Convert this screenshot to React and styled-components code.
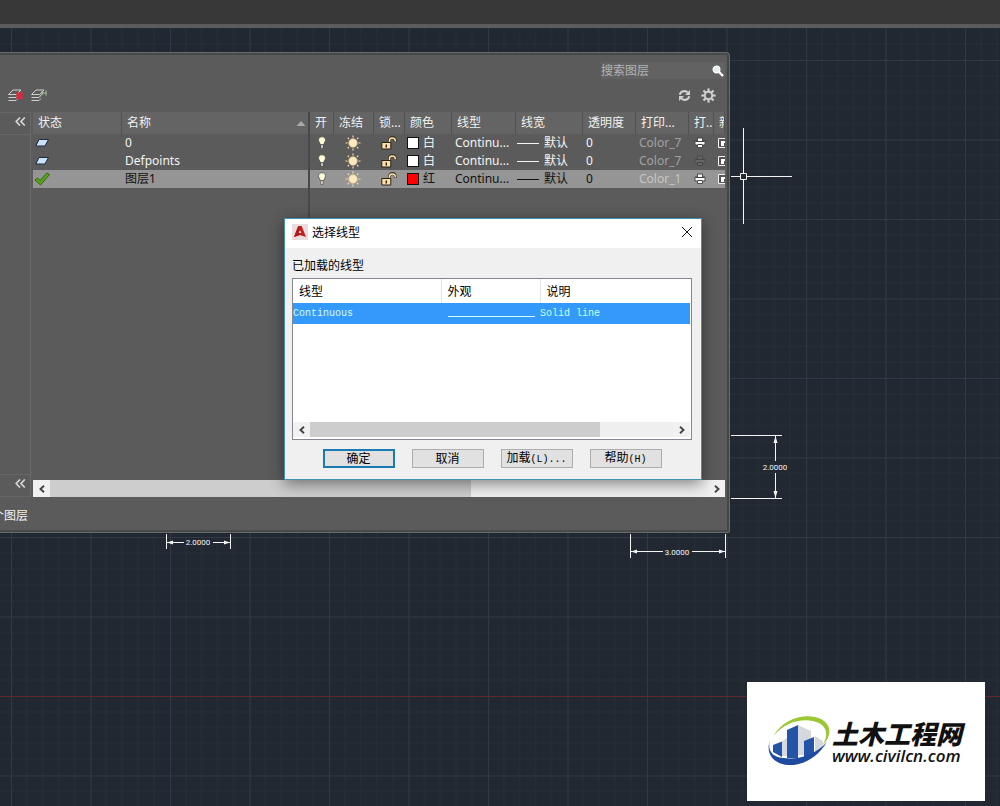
import React from "react";
import styled, { createGlobalStyle } from "styled-components";

const uiFont = `"Noto Sans", "Noto Sans CJK SC", sans-serif`;
const monoFont = `"Liberation Mono", "Noto Sans CJK SC", monospace`;

const GlobalStyle = createGlobalStyle`
    * { box-sizing: border-box; }
    body {
        margin: 0;
        background: #222832;
        font-family: ${uiFont};
        font-size: 12px;
    }
    button, input { font-family: inherit; font-size: inherit; }
`;

const Page = styled.div`
    display: flex;
    flex-direction: column;
    min-height: 100vh;
    overflow: hidden;
`;

const TopBar = styled.header`
    height: 28px;
    background: #383838;
    border-bottom: 4px solid #5c5c5c;
`;

const Canvas = styled.main`
    position: relative;
    flex: 1;
    min-height: 560px;
    background: #222831;
    overflow: hidden;
`;

const Drawing = styled.svg`
    position: absolute;
    inset: 0;
    width: 100%;
    height: 100%;
    font-family: Roboto, sans-serif;
    font-size: 8px;
`;

const Palette = styled.section`
    position: absolute;
    top: 24px;
    left: 0;
    width: 73%;
    min-width: 640px;
    display: flex;
    flex-direction: column;
    padding: 9px 4px 0 0;
    color: #f2f2f2;
    background: #5b5b5b;
    border: solid #676a68;
    border-width: 1px 1px 1px 0;
    border-radius: 0 4px 2px 0;
    box-shadow: inset -2px 0 #454745, inset 0 2px #464a4a, inset 0 -2px #4a4a4a;
`;

const SearchBox = styled.label`
    display: flex;
    align-items: center;
    align-self: flex-end;
    width: 124px;
    height: 17px;
    background: #626262;

    input {
        flex: 1;
        min-width: 0;
        padding: 0;
        border: 0;
        background: none;
        color: #fff;
        outline: none;
    }
    input::placeholder { color: #b4b4b4; opacity: 1; }
`;

const Tools = styled.div`
    display: flex;
    align-items: center;
    gap: 6px;
    height: 33px;
    padding: 0 9px 0 7px;
`;

const IconButton = styled.button`
    display: flex;
    padding: 0;
    border: 0;
    background: none;
    color: ${props => props.$color || "#d0d0d0"};
    margin-left: ${props => props.$push ? "auto" : "0"};
`;

const PaletteBody = styled.div`
    display: flex;
    align-items: stretch;
`;

const TreeStrip = styled.div`
    display: flex;
    flex-direction: column;
    justify-content: space-between;
    width: 31px;
    margin-right: 2px;
    border-right: 1px solid #6a6a6a;
`;

const Fold = styled.button`
    height: 23px;
    padding: 0 4px 4px 0;
    border: solid #666;
    border-width: 1px 0;
    background: none;
    color: #d4d4d4;
    display: flex;
    align-items: center;
    justify-content: flex-end;
`;

const Layers = styled.div`
    flex: 1;
    min-width: 0;
`;

const LayerTable = styled.table`
    width: 100%;
    height: 368px;
    table-layout: fixed;
    border-collapse: separate;
    border-spacing: 0;
    white-space: nowrap;
`;

const Th = styled.th`
    height: 22px;
    padding: 0 0 0 5px;
    overflow: hidden;
    text-align: left;
    font-weight: 400;
    line-height: 16px;
    background: #646464;
    border-right: ${props => props.$split ? "2px solid #484848" : "1px solid #515151"};
`;

const HeadLabel = styled.span`
    display: flex;
    align-items: center;
    justify-content: space-between;
`;

const Td = styled.td`
    height: 18px;
    padding: 0 0 0 ${props => props.$tight ? 1 : 3}px;
    overflow: hidden;
    line-height: 16px;
    color: ${props => props.$dim ? "#a2a2a2" : "inherit"};
    border-right: ${props => props.$split ? "2px solid #484848" : "0"};

    svg { display: block; }
`;

const Tr = styled.tr`
    height: 18px;
    color: ${props => props.$on ? "#111" : "#f4f4f4"};
    background: ${props => props.$on ? "#959595" : "none"};
`;

const FillRow = styled.tr`
    height: 100%;
`;

const Cell = styled.span`
    display: flex;
    align-items: center;
    gap: ${props => props.$gap || 0}px;
    padding-left: ${props => props.$indent || 0}px;
`;

const Swatch = styled.i`
    width: 12px;
    height: 12px;
    border: 1px solid #111;
    background: ${props => props.$color};
`;

const Weight = styled.i`
    width: 22px;
    height: 1px;
    background: currentColor;
`;

const PlotStyle = styled.span`
    color: ${props => props.$on ? "#c6c6c6" : "inherit"};
`;

const ScrollBar = styled.div`
    display: flex;
    height: ${props => props.$size}px;
    background: #efefef;
`;

const ScrollTrack = styled.div`
    flex: 1;
`;

const ScrollThumb = styled.div`
    height: 100%;
    background: #cdcdcd;
`;

const ScrollArrow = styled.button`
    display: flex;
    align-items: center;
    justify-content: center;
    width: 17px;
    padding: 0;
    border: 0;
    background: #f1f1f1;
    color: #444;
`;

const StatusLine = styled.footer`
    display: flex;
    justify-content: flex-end;
    align-items: center;
    width: 28px;
    height: 35px;
    overflow: hidden;
    white-space: nowrap;
`;

const Dialog = styled.div`
    position: absolute;
    top: 190px;
    left: 284px;
    width: 418px;
    color: #000;
    background: #f0f0f0;
    border: 1px solid #3f93b0;
    box-shadow: 0 4px 14px rgba(0, 0, 0, 0.45);
`;

const TitleBar = styled.div`
    display: flex;
    align-items: center;
    gap: 4px;
    height: 29px;
    padding: 0 8px 3px 7px;
    background: #fff;

    h1 {
        flex: 1;
        margin: 0;
        font-size: 12px;
        font-weight: 400;
    }
`;

const DialogBody = styled.div`
    padding: 10px 9px 11px 7px;
`;

const ListLabel = styled.div`
    line-height: 16px;
    margin-bottom: 4px;
`;

const ListBox = styled.div`
    display: flex;
    flex-direction: column;
    height: 162px;
    padding: 0 1px 2px 0;
    background: #fff;
    border: 1px solid #828790;
`;

const ListArea = styled.div`
    flex: 1;
`;

const TypeTable = styled.table`
    width: 100%;
    table-layout: fixed;
    border-collapse: collapse;
    text-align: left;

    th {
        height: 24px;
        padding: 0 0 0 6px;
        font-weight: 400;
        border-right: 1px solid #e3e3e3;
    }
    th:last-child { border: 0; }
    td {
        height: 21px;
        padding: 0;
        color: #d4ffff;
        background: #3399fa;
        font-family: ${monoFont};
        font-size: 10px;
    }
`;

const Sample = styled.div`
    height: 1px;
    margin: 6px 5px 0 7px;
    background: #d4ffff;
`;

const Actions = styled.div`
    display: flex;
    justify-content: center;
    gap: 17px;
    margin-top: 9px;
`;

const PushButton = styled.button`
    width: 72px;
    height: 19px;
    padding: 0;
    line-height: 14px;
    color: #000;
    background: #e1e1e1;
    border: ${props => props.$default ? "2px solid #1a7bb3" : "1px solid #adadad"};
    white-space: nowrap;

    span {
        font-family: ${monoFont};
        font-size: 10px;
    }
`;

const Brand = styled.a`
    position: absolute;
    right: 15px;
    bottom: 5px;
    display: flex;
    align-items: center;
    width: 238px;
    height: 119px;
    padding-left: 20px;
    color: #111;
    background: #fff;
    text-decoration: none;
`;

const BrandText = styled.span`
    display: flex;
    flex-direction: column;
    white-space: nowrap;

    b {
        font-family: "Noto Sans CJK SC", sans-serif;
        font-size: 26px;
        font-weight: 900;
        font-style: italic;
        line-height: 28px;
    }
    em {
        font-family: "Open Sans", sans-serif;
        font-size: 17px;
        font-weight: 600;
        line-height: 17px;
    }
`;

const SheetIcon = () => (
    <svg width="15" height="10" viewBox="0 0 15 10">
        <path d="M4 1.500h9.500L10 8H.8z" fill="#c9e2fb" stroke="#1d2c40" />
    </svg>
);

const CheckIcon = () => (
    <svg width="17" height="14" viewBox="0 0 17 14">
        <path d="M1 8l2.500-2L6 8.500 13 1l2.500 1.500L6.500 13z" fill="#58a51c" stroke="#2d6a0c" />
    </svg>
);

const BulbIcon = () => (
    <svg width="10" height="14" viewBox="0 0 10 14">
        <path d="M5 .8c2.200 0 3.500 1.500 3.500 3.300C8.500 5.700 7 6.500 6.800 8.500H3.200C3 6.500 1.500 5.700 1.500 4.100 1.500 2.300 2.800.8 5 .8z" fill="#fdfbd8" stroke="#4c4c3c" strokeWidth=".7" />
        <path d="M4 8.500h2v4H4z" fill="#f0f0e6" stroke="#333" strokeWidth=".5" />
    </svg>
);

const SunIcon = () => (
    <svg width="16" height="16" viewBox="0 0 16 16">
        <path d="M8 .5v2M8 13.500v2M.5 8h2M13.500 8h2M2.700 2.700l1.300 1.300M12 12l1.300 1.300M2.700 13.300 4 12M12 4l1.300-1.300" stroke="#f5dcae" strokeWidth="1.200" />
        <circle cx="8" cy="8" r="4.200" fill="#fbeac0" stroke="#ecc490" strokeWidth=".8" />
    </svg>
);

const LockIcon = () => (
    <svg width="16" height="14" viewBox="0 0 16 14">
        <path d="M8.500 7V4.500C8.500 .5 14 .5 14.300 4.500V6" fill="none" stroke="#3a3020" strokeWidth="2.800" />
        <path d="M8.500 7V4.500C8.500 1 14 1 14.300 4.500v1" fill="none" stroke="#fbdfa6" strokeWidth="1.500" />
        <path d="M.8 6.500h9V13h-9z" fill="#fbdfa6" stroke="#2a2112" />
        <path d="M5.300 8.500v3" stroke="#2a2112" strokeWidth="1.400" />
    </svg>
);

const PrinterIcon = ({ off }) => (
    <svg width="13" height="12" viewBox="0 0 13 12">
        <path d="M3.500 1h5v3H11v4H8.500v2.500h-5V8H1V4h2.500z" fill={off ? "#656565" : "#f7f7f7"} stroke={off ? "#484848" : "#333"} strokeWidth=".8" />
        <path d="M1.500 4.500h9M3.500 7.500h5" stroke={off ? "#484848" : "#444"} />
    </svg>
);

const ViewportIcon = () => (
    <svg width="12" height="12" viewBox="0 0 12 12">
        <path d="M1.500 1.500h10v9h-10z" fill="#555" stroke="#f2f2f2" />
        <path d="M4 4h7v2H7v3H4z" fill="#fff" />
    </svg>
);

const LayersIcon = ({ mark }) => (
    <svg width="17" height="15" viewBox="0 0 17 15" fill="none">
        <path d="M6 2h8L9.500 6.500h-8zM1.500 9.500H9l2-2M1.500 12.500H9l2-2" stroke="#d0d0d0" />
        {mark === "delete"
            ? <path d="M10 5h5v5.500h-5zM9.500 4l6.500 7.500M16 4l-6.500 7.500" fill="#e0273f" stroke="#e0273f" />
            : <path d="M9.500 8.500l4-4M12 3v4M16 2.500v5M12 5h4" stroke="#a9c69c" />}
    </svg>
);

const RefreshIcon = () => (
    <svg width="13" height="13" viewBox="0 0 13 13" fill="none">
        <path d="M1.800 5.800C2.500 2 7.500 1 9.800 3.600M11.200 7.200C10.500 11 5.500 12 3.200 9.400" stroke="currentColor" strokeWidth="2" />
        <path d="M12 1v5H7zM1 12V7h5z" fill="currentColor" />
    </svg>
);

const GearIcon = () => (
    <svg width="15" height="15" viewBox="0 0 15 15" fill="none" stroke="currentColor">
        <circle cx="7.500" cy="7.500" r="3.700" strokeWidth="2" />
        {[0, 45, 90, 135, 180, 225, 270, 315].map(a => (
            <path key={a} d="M7.500 .4v2.900" strokeWidth="2.200" transform={`rotate(${a} 7.500 7.500)`} />
        ))}
    </svg>
);

const FoldIcon = () => (
    <svg width="11" height="9" viewBox="0 0 11 9" fill="none" stroke="currentColor" strokeWidth="1.700">
        <path d="M5 .5 1.200 4.500 5 8.500M9.800.5 6 4.500l3.800 4" />
    </svg>
);

const Chevron = ({ right }) => (
    <svg width="6" height="8" viewBox="0 0 6 8" fill="none" stroke="currentColor" strokeWidth="1.900">
        <path d={right ? "M1 .8 4.500 4 1 7.200" : "M5 .8 1.500 4 5 7.200"} />
    </svg>
);

const SearchIcon = () => (
    <svg width="14" height="14" viewBox="0 0 14 14">
        <path d="M8 8l4 4" stroke="#fff" strokeWidth="2.400" />
        <circle cx="5.500" cy="5.500" r="3.400" fill="#e9f0f2" stroke="#fff" strokeWidth="1.200" />
    </svg>
);

const AppIcon = () => (
    <svg width="16" height="16" viewBox="0 0 16 16">
        <path d="M0 0h16v16H0z" fill="#e9dede" />
        <path d="M6.200 2h3.500L14 13l-4-1.300-2-.7-6 2z" fill="#c4201f" />
        <path d="M6.200 2 2 13l6-2 1-3z" fill="#b01b1c" />
        <path d="M8 6l1.300 3H6.700z" fill="#f0dada" />
    </svg>
);

const BrandLogo = () => (
    <svg width="65" height="56" viewBox="0 0 65 56">
        <path d="M6.500 22C16 4 40-2 54 5c11 6 11 17 1 27 6-9 6-18-3-23C40 3 19 6 6.500 22z" fill="#9bc832" />
        <path d="M31 11l13 6v24H31z" fill="#d5d9dd" />
        <path d="M48 22l8 5v6l-8 6zM15 27l5-3v18h-5z" fill="#d5d9dd" />
        <path d="M20 16l11-5v33H20z" fill="#2454a8" />
        <path d="M37 27l10-4v16l-10 5z" fill="#2454a8" />
        <path d="M6 31l9-3.500V43l-9-5z" fill="#2454a8" />
        <path d="M3 26c-3 10 2 17 13 18 16 2 32-3 44-16C51 43 36 52 21 51 7 50-2 40 3 26z" fill="#1e4ba0" />
    </svg>
);

function Background() {
    const minor = [1, 2, 3, 4].map(n => n * 15.9);
    return (
        <Drawing aria-hidden="true">
            <defs>
                <pattern id="grid" x="11" y="32" width="79.500" height="79.500" patternUnits="userSpaceOnUse">
                    {minor.map(n => (
                        <path key={n} d={`M${n} 0V79.500M0 ${n}H79.500`} stroke="#282e38" />
                    ))}
                    <path d="M.5 0V79.500M0 .5H79.500" stroke="#333944" />
                </pattern>
            </defs>
            <rect width="100%" height="100%" fill="url(#grid)" />
            <rect y="668" width="100%" height="1" fill="#5f2630" />

            <g stroke="#f4f4f4" fill="none">
                <path d="M743.500 100v45M743.500 152v44M731 148.500h9M747 148.500h45" />
                <path d="M740.500 145.500h6v6h-6z" />
                <path d="M731 407.500h51M731 470.500h51M775.500 407v26M775.500 445v25" />
                <path d="M166.500 506v15M230.500 506v15M167 514.500h17M213 514.500h17" />
                <path d="M630.500 506v24M725.500 506v24M631 523.500h32M692 523.500h33" />
            </g>
            <g fill="#f4f4f4" textAnchor="middle">
                <path d="M775.500 408l2 7h-4zM775.500 470l2-7h-4z" />
                <path d="M167 514.500l6-2v4zM230 514.500l-6-2v4z" />
                <path d="M631 523.500l6-2v4zM725 523.500l-6-2v4z" />
                <text x="775" y="442">2.0000</text>
                <text x="198" y="517">2.0000</text>
                <text x="677" y="527">3.0000</text>
            </g>
        </Drawing>
    );
}

const columns = [
    { label: "状态", width: 89 },
    { label: "名称", sorted: true },
    { label: "开", width: 24 },
    { label: "冻结", width: 40 },
    { label: "锁...", width: 31 },
    { label: "颜色", width: 47 },
    { label: "线型", width: 64 },
    { label: "线宽", width: 67 },
    { label: "透明度", width: 53 },
    { label: "打印...", width: 53 },
    { label: "打..", width: 25 },
    { label: "新", width: 11 },
];

const layers = [
    { name: "0", color: "#fff", colorName: "白", style: "Color_7" },
    { name: "Defpoints", color: "#fff", colorName: "白", style: "Color_7", noPlot: true },
    { name: "图层1", color: "#f00", colorName: "红", style: "Color_1", current: true },
];

function HorizontalScroll({ size, ratio }) {
    return (
        <ScrollBar $size={size}>
            <ScrollArrow aria-label="向左滚动"><Chevron /></ScrollArrow>
            <ScrollTrack>
                <ScrollThumb style={{ width: `${ratio}%` }} />
            </ScrollTrack>
            <ScrollArrow aria-label="向右滚动"><Chevron right /></ScrollArrow>
        </ScrollBar>
    );
}

function LayerRow({ layer }) {
    return (
        <Tr $on={layer.current}>
            <Td $tight>{layer.current ? <CheckIcon /> : <Cell $indent={1}><SheetIcon /></Cell>}</Td>
            <Td $split>{layer.name}</Td>
            <Td><Cell $indent={4}><BulbIcon /></Cell></Td>
            <Td><Cell $indent={8}><SunIcon /></Cell></Td>
            <Td><Cell $indent={4}><LockIcon /></Cell></Td>
            <Td $tight><Cell $gap={4} $indent={1}><Swatch $color={layer.color} />{layer.colorName}</Cell></Td>
            <Td>Continu...</Td>
            <Td $tight><Cell $gap={5}><Weight />默认</Cell></Td>
            <Td>0</Td>
            <Td $dim><PlotStyle $on={layer.current}>{layer.style}</PlotStyle></Td>
            <Td><Cell $indent={2}><PrinterIcon off={layer.noPlot} /></Cell></Td>
            <Td><ViewportIcon /></Td>
        </Tr>
    );
}

function LayerPalette() {
    return (
        <Palette>
            <SearchBox>
                <input type="text" placeholder="搜索图层" aria-label="搜索图层" />
                <SearchIcon />
            </SearchBox>
            <Tools>
                <IconButton aria-label="删除图层"><LayersIcon mark="delete" /></IconButton>
                <IconButton aria-label="置为当前"><LayersIcon /></IconButton>
                <IconButton aria-label="刷新" $push><RefreshIcon /></IconButton>
                <IconButton aria-label="设置"><Cell $indent={4}><GearIcon /></Cell></IconButton>
            </Tools>
            <PaletteBody>
                <TreeStrip>
                    <Fold aria-label="收拢过滤器树"><FoldIcon /></Fold>
                    <Fold aria-label="收拢过滤器"><FoldIcon /></Fold>
                </TreeStrip>
                <Layers>
                    <LayerTable>
                        <colgroup>
                            {columns.map(c => <col key={c.label} width={c.width} />)}
                        </colgroup>
                        <thead>
                            <tr>
                                {columns.map(c => (
                                    <Th key={c.label} $split={c.sorted}>
                                        <HeadLabel>
                                            {c.label}
                                            {c.sorted && (
                                                <svg width="12" height="5" viewBox="0 0 12 5">
                                                    <path d="M5 0 9.500 5H.5z" fill="#a8a8a8" />
                                                </svg>
                                            )}
                                        </HeadLabel>
                                    </Th>
                                ))}
                            </tr>
                        </thead>
                        <tbody>
                            {layers.map(l => <LayerRow key={l.name} layer={l} />)}
                            <FillRow>
                                <Td />
                                <Td $split />
                                <Td colSpan={10} />
                            </FillRow>
                        </tbody>
                    </LayerTable>
                    <HorizontalScroll size={17} ratio={64} />
                </Layers>
            </PaletteBody>
            <StatusLine>个图层</StatusLine>
        </Palette>
    );
}

function LinetypeDialog() {
    return (
        <Dialog role="dialog" aria-labelledby="linetype-title">
            <TitleBar>
                <AppIcon />
                <h1 id="linetype-title">选择线型</h1>
                <IconButton aria-label="关闭" $color="#111">
                    <svg width="12" height="12" viewBox="0 0 12 12" stroke="currentColor">
                        <path d="M1 1l10 10M11 1 1 11" />
                    </svg>
                </IconButton>
            </TitleBar>
            <DialogBody>
                <ListLabel id="loaded-types">已加载的线型</ListLabel>
                <ListBox>
                    <ListArea>
                        <TypeTable aria-labelledby="loaded-types">
                            <colgroup>
                                <col width="148" />
                                <col width="99" />
                                <col />
                            </colgroup>
                            <thead>
                                <tr><th>线型</th><th>外观</th><th>说明</th></tr>
                            </thead>
                            <tbody>
                                <tr>
                                    <td>Continuous</td>
                                    <td><Sample /></td>
                                    <td>Solid line</td>
                                </tr>
                            </tbody>
                        </TypeTable>
                    </ListArea>
                    <HorizontalScroll size={15} ratio={80} />
                </ListBox>
                <Actions>
                    <PushButton $default>确定</PushButton>
                    <PushButton>取消</PushButton>
                    <PushButton>加载<span>(L)...</span></PushButton>
                    <PushButton>帮助<span>(H)</span></PushButton>
                </Actions>
            </DialogBody>
        </Dialog>
    );
}

export default function App() {
    return (
        <Page>
            <GlobalStyle />
            <TopBar />
            <Canvas>
                <Background />
                <LayerPalette />
                <LinetypeDialog />
                <Brand href="http://www.civilcn.com">
                    <BrandLogo />
                    <BrandText>
                        <b>土木工程网</b>
                        <em>www.civilcn.com</em>
                    </BrandText>
                </Brand>
            </Canvas>
        </Page>
    );
}
